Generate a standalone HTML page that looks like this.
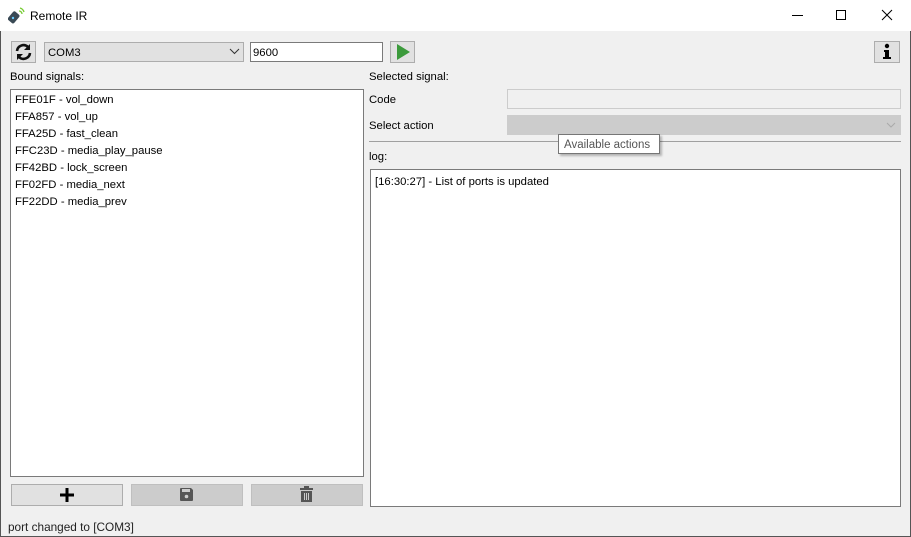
<!DOCTYPE html>
<html><head><meta charset="utf-8"><style>
*{box-sizing:border-box;margin:0;padding:0}
body{width:911px;height:537px;position:relative;background:#f0f0f0;font-family:"Liberation Sans",sans-serif;font-size:11.3px;color:#000;overflow:hidden}
.a{position:absolute}
.tb{left:0;top:0;width:911px;height:31px;background:#fff}
.btn{background:#e1e1e1;border:1px solid #adadad}
.dis{background:#cccccc;border:1px solid #bfbfbf}
.box{background:#fff;border:1px solid #7a7a7a}
.list div{height:17px;line-height:17px}
</style></head><body>
<div class="a tb"></div>
<svg class="a" style="left:8px;top:6px" width="18" height="18" viewBox="0 0 18 18"><rect x="2" y="6" width="8" height="11" rx="2" transform="rotate(40 6 11)" fill="#3a4a55"/><circle cx="5" cy="12" r="1.2" fill="#6cf"/><path d="M11 5a3 3 0 0 1 3 3M12 2a6 6 0 0 1 4 4" stroke="#7c3" stroke-width="1.3" fill="none"/></svg>
<div class="a" style="left:30px;top:9px;font-size:12px">Remote IR</div>
<div class="a" style="left:792px;top:15px;width:11px;height:1px;background:#000"></div>
<div class="a" style="left:836px;top:10px;width:10px;height:10px;border:1px solid #000"></div>
<svg class="a" style="left:881px;top:9px" width="12" height="12"><path d="M1 1L11 11M11 1L1 11" stroke="#000" stroke-width="1"/></svg>
<div class="a" style="left:0;top:31px;width:1px;height:506px;background:#555"></div>
<div class="a" style="left:910px;top:31px;width:1px;height:506px;background:#555"></div>
<div class="a" style="left:0;top:536px;width:911px;height:1px;background:#555"></div>

<div class="a btn" style="left:11px;top:41px;width:25px;height:22px"></div>
<svg class="a" style="left:14px;top:43px" width="19" height="18" viewBox="0 0 19 18"><path d="M3 8a6.5 6.5 0 0 1 11-4" stroke="#111" stroke-width="2.6" fill="none"/><path d="M16 1v6h-6z" fill="#111"/><path d="M16 10a6.5 6.5 0 0 1-11 4" stroke="#111" stroke-width="2.6" fill="none"/><path d="M3 17v-6h6z" fill="#111"/></svg>
<div class="a btn" style="left:44px;top:42px;width:200px;height:20px"></div>
<div class="a" style="left:48px;top:47px">COM3</div>
<svg class="a" style="left:229px;top:48px" width="11" height="7"><path d="M1 1l4.5 4.5L10 1" stroke="#333" fill="none"/></svg>
<div class="a box" style="left:250px;top:42px;width:133px;height:20px"></div>
<div class="a" style="left:253px;top:47px">9600</div>
<div class="a btn" style="left:390px;top:41px;width:25px;height:22px"></div>
<svg class="a" style="left:395px;top:43px" width="16" height="18"><path d="M2 1L15 9L2 17z" fill="#3b9a3b"/></svg>
<div class="a btn" style="left:874px;top:41px;width:26px;height:22px"></div>
<svg class="a" style="left:880px;top:43px" width="14" height="18"><circle cx="7" cy="3" r="2.2" fill="#000"/><path d="M4 7h5v7h2v2H3v-2h2V9H4z" fill="#000"/></svg>

<div class="a" style="left:10px;top:71px">Bound signals:</div>
<div class="a box list" style="left:10px;top:89px;width:354px;height:388px;padding:2px 0 0 4px">
<div>FFE01F - vol_down</div><div>FFA857 - vol_up</div><div>FFA25D - fast_clean</div><div>FFC23D - media_play_pause</div><div>FF42BD - lock_screen</div><div>FF02FD - media_next</div><div>FF22DD - media_prev</div></div>
<div class="a btn" style="left:11px;top:484px;width:112px;height:22px"></div>
<svg class="a" style="left:59px;top:487px" width="16" height="16"><path d="M8 1v14M1 8h14" stroke="#000" stroke-width="3"/></svg>
<div class="a dis" style="left:131px;top:484px;width:112px;height:22px"></div>
<svg class="a" style="left:179px;top:487px" width="15" height="15"><path d="M1 2a1 1 0 0 1 1-1h10l2 2v10a1 1 0 0 1-1 1H2a1 1 0 0 1-1-1z" fill="#555"/><rect x="3" y="2" width="8" height="3" fill="#ccc"/><circle cx="7.5" cy="9.5" r="1.8" fill="#ccc"/></svg>
<div class="a dis" style="left:251px;top:484px;width:112px;height:22px"></div>
<svg class="a" style="left:299px;top:486px" width="15" height="18"><rect x="1" y="2" width="13" height="2" fill="#555"/><rect x="5" y="0" width="5" height="2" fill="#555"/><path d="M2 5h11v11H2z" fill="#555"/><path d="M5.5 7v7M7.5 7v7M9.5 7v7" stroke="#ccc"/></svg>

<div class="a" style="left:369px;top:71px">Selected signal:</div>
<div class="a" style="left:369px;top:94px">Code</div>
<div class="a" style="left:507px;top:89px;width:394px;height:20px;background:#f0f0f0;border:1px solid #ccc"></div>
<div class="a" style="left:369px;top:120px">Select action</div>
<div class="a" style="left:507px;top:115px;width:394px;height:20px;background:#cccccc"></div>
<svg class="a" style="left:886px;top:122px" width="10" height="6"><path d="M1 1l4 4 4-4" stroke="#aaa" fill="none"/></svg>
<div class="a" style="left:369px;top:141px;width:532px;height:1px;background:#a0a0a0"></div>
<div class="a" style="left:558px;top:134px;width:102px;height:20px;background:#fff;border:1px solid #767676;box-shadow:2px 2px 2px rgba(0,0,0,.25);padding:4px 0 0 5px;color:#555;font-size:11.5px">Available actions</div>
<div class="a" style="left:369px;top:151px">log:</div>
<div class="a box" style="left:370px;top:169px;width:531px;height:338px;padding:6px 0 0 4px">[16:30:27] - List of ports is updated</div>
<div class="a" style="left:8px;top:520px;color:#222;font-size:11.8px">port changed to [COM3]</div>
</body></html>
